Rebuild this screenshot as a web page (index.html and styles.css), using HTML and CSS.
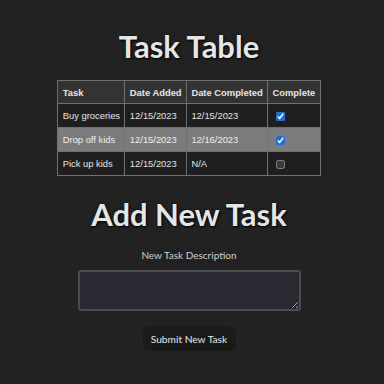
FILE: index.html
```html
<!DOCTYPE html>
<html lang="en">
<head>
<meta charset="utf-8">
<title>Task Table</title>
<link rel="stylesheet" href="styles.css">
</head>
<body>
<main class="page">
  <h1 class="title">Task Table</h1>
  <table class="tasks">
    <thead>
      <tr><th>Task</th><th>Date Added</th><th>Date Completed</th><th>Complete</th></tr>
    </thead>
    <tbody>
      <tr><td>Buy groceries</td><td>12/15/2023</td><td>12/15/2023</td><td><input type="checkbox" checked></td></tr>
      <tr class="hl"><td>Drop off kids</td><td>12/15/2023</td><td>12/16/2023</td><td><input type="checkbox" checked></td></tr>
      <tr><td>Pick up kids</td><td>12/15/2023</td><td>N/A</td><td><input type="checkbox"></td></tr>
    </tbody>
  </table>
  <h1 class="title title-add">Add New Task</h1>
  <form class="add-form">
    <label class="label" for="desc">New Task Description</label>
    <textarea id="desc" class="desc"></textarea>
    <button type="button" class="submit">Submit New Task</button>
  </form>
</main>
</body>
</html>
```

FILE: styles.css
```css
html, body {
  margin: 0;
  padding: 0;
  background: #222222;
  color-scheme: dark;
}
.page {
  width: 378px;
  display: flex;
  flex-direction: column;
  align-items: center;
  padding-top: 26px;
  font-family: Lato, "Open Sans", sans-serif;
}
.title {
  margin: 0;
  font-family: Lato, "Open Sans", sans-serif;
  font-weight: 700;
  font-size: 31px;
  line-height: 40px;
  color: #e6e6e6;
  text-shadow: 1px 1px 2px #000, 0 0 2px #000;
}
.tasks {
  margin-top: 14px;
  border-collapse: collapse;
  border: 1px solid #808080;
  font-family: "Liberation Sans", Arial, sans-serif;
  font-size: 9.4px;
  color: #e6e6e6;
}
.tasks th, .tasks td {
  border: 1px solid #707070;
  padding: 0 4.4px;
  box-sizing: border-box;
  text-align: left;
  white-space: nowrap;
}
.tasks th {
  background: #333333;
  font-weight: 700;
  height: 23px;
}
.tasks td {
  background: #1f1f1f;
  height: 24px;
}
.tasks tr.hl td {
  background: #7b7b7b;
  color: #eeeeee;
}
.tasks input[type="checkbox"] {
  margin: 0 0 0 3px;
  width: 9px;
  height: 9px;
  vertical-align: middle;
  accent-color: #1a6be8;
}
.title-add {
  margin-top: 18px;
}
.add-form {
  display: flex;
  flex-direction: column;
  align-items: center;
}
.label {
  margin-top: 15px;
  font-size: 10px;
  color: #d0d0d0;
}
.desc {
  margin-top: 9px;
  width: 223px;
  height: 41px;
  box-sizing: border-box;
  background: #2b2a33;
  border: 2px solid #4b4b52;
  border-radius: 3px;
  padding: 2px;
  resize: vertical;
}
.submit {
  margin-top: 15px;
  width: 93px;
  height: 25px;
  background: #1a1a1a;
  color: #e8e8e8;
  border: none;
  border-radius: 6px;
  font-family: Lato, "Open Sans", sans-serif;
  font-size: 10.2px;
  padding: 0;
}
```
